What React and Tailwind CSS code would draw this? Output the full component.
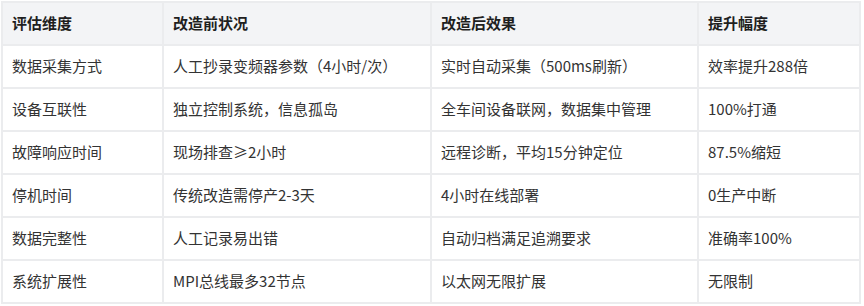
const rows = [
  ['数据采集方式', '人工抄录变频器参数（4小时/次）', '实时自动采集（500ms刷新）', '效率提升288倍'],
  ['设备互联性', '独立控制系统，信息孤岛', '全车间设备联网，数据集中管理', '100%打通'],
  ['故障响应时间', '现场排查≥2小时', '远程诊断，平均15分钟定位', '87.5%缩短'],
  ['停机时间', '传统改造需停产2-3天', '4小时在线部署', '0生产中断'],
  ['数据完整性', '人工记录易出错', '自动归档满足追溯要求', '准确率100%'],
  ['系统扩展性', 'MPI总线最多32节点', '以太网无限扩展', '无限制'],
];

const headers = ['评估维度', '改造前状况', '改造后效果', '提升幅度'];

export default function App() {
  return (
    <div className="w-[864px] h-[306px] bg-white pl-px pt-px font-['Noto_Sans_CJK_SC','Noto_Sans',sans-serif]">
      <table className="w-[858px] border-collapse table-fixed text-[15px]">
        <colgroup>
          <col className="w-[161px]" />
          <col className="w-[268px]" />
          <col className="w-[267px]" />
          <col className="w-[162px]" />
        </colgroup>
        <thead>
          <tr className="bg-[#f3f4f6] h-[43px]">
            {headers.map((h) => (
              <th
                key={h}
                className="border-2 border-[#ebecee] px-[9px] text-left font-bold text-[#1f1f1f]"
              >
                {h}
              </th>
            ))}
          </tr>
        </thead>
        <tbody>
          {rows.map((r) => (
            <tr key={r[0]} className="h-[43px]">
              {r.map((c, i) => (
                <td key={i} className="border-2 border-[#ebecee] px-[9px] text-[#333333] whitespace-nowrap">
                  {c}
                </td>
              ))}
            </tr>
          ))}
        </tbody>
      </table>
    </div>
  );
}
